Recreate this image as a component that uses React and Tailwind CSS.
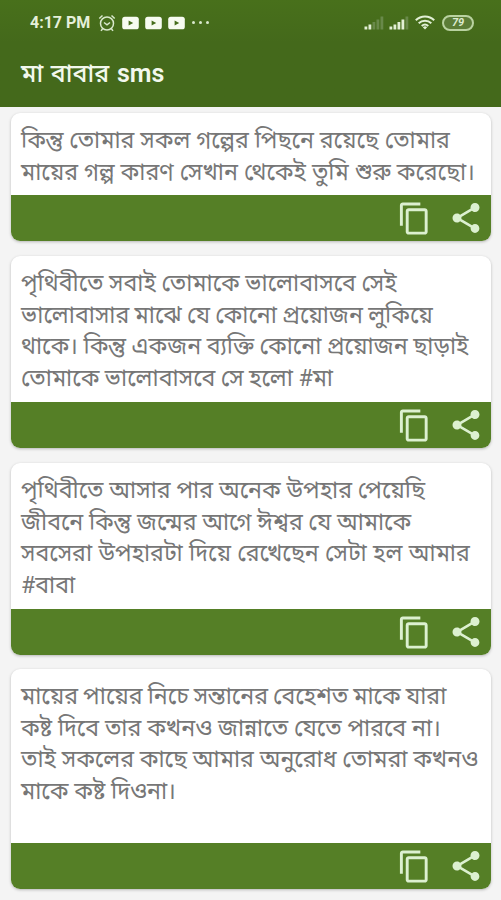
const cards = [
  {
    height: "h-[128px]",
    gap: "mt-[6px]",
    lines: [
      ["কিন্তু তোমার সকল গল্পের পিছনে রয়েছে তোমার", "[word-spacing:0.1px]"],
      ["মায়ের গল্প কারণ সেখান থেকেই তুমি শুরু করেছো।", "[word-spacing:0.3px]"],
    ],
  },
  {
    height: "h-[192px]",
    gap: "mt-[15px]",
    lines: [
      ["পৃথিবীতে সবাই তোমাকে ভালোবাসবে সেই", "[word-spacing:-0.2px]"],
      ["ভালোবাসার মাঝে যে কোনো প্রয়োজন লুকিয়ে", "[word-spacing:-0.5px]"],
      ["থাকে। কিন্তু একজন ব্যক্তি কোনো প্রয়োজন ছাড়াই", "[word-spacing:-0.2px]"],
      ["তোমাকে ভালোবাসবে সে হলো #মা", "[word-spacing:-0.3px]"],
    ],
  },
  {
    height: "h-[192px]",
    gap: "mt-[15px]",
    lines: [
      ["পৃথিবীতে আসার পার অনেক উপহার পেয়েছি", "[word-spacing:0.1px]"],
      ["জীবনে কিন্তু জন্মের আগে ঈশ্বর যে আমাকে", "[word-spacing:-0.1px]"],
      ["সবসেরা উপহারটা দিয়ে রেখেছেন সেটা হল আমার", "[word-spacing:0.6px]"],
      ["#বাবা", ""],
    ],
  },
  {
    height: "h-[220px]",
    gap: "mt-[14px]",
    lines: [
      ["মায়ের পায়ের নিচে সন্তানের বেহেশত মাকে যারা", "[word-spacing:-0.7px]"],
      ["কষ্ট দিবে তার কখনও জান্নাতে যেতে পারবে না।", "[word-spacing:0.1px]"],
      ["তাই সকলের কাছে আমার অনুরোধ তোমরা কখনও", ""],
      ["মাকে কষ্ট দিওনা।", ""],
    ],
  },
];

function CopyIcon() {
  return (
    <svg viewBox="0 0 24 24" className="h-[35px] w-[35px] fill-[#dcf0d0]">
      <path d="M16 1H4c-1.1 0-2 .9-2 2v14h2V3h12V1zm3 4H8c-1.1 0-2 .9-2 2v14c0 1.1.9 2 2 2h11c1.1 0 2-.9 2-2V7c0-1.1-.9-2-2-2zm0 16H8V7h11v14z" />
    </svg>
  );
}

function ShareIcon() {
  return (
    <svg viewBox="0 0 24 24" className="h-[36px] w-[36px] fill-[#dcf0d0]">
      <path d="M18 16.08c-.76 0-1.44.3-1.96.77L8.91 12.7c.05-.23.09-.46.09-.7s-.04-.47-.09-.7l7.05-4.11c.54.5 1.25.81 2.04.81 1.66 0 3-1.34 3-3s-1.34-3-3-3-3 1.34-3 3c0 .24.04.47.09.7L8.04 9.81C7.5 9.31 6.79 9 6 9c-1.66 0-3 1.34-3 3s1.34 3 3 3c.79 0 1.5-.31 2.04-.81l7.12 4.16c-.05.21-.08.43-.08.65 0 1.61 1.31 2.92 2.92 2.92s2.92-1.31 2.92-2.92-1.31-2.92-2.92-2.92z" />
    </svg>
  );
}

function AlarmIcon() {
  return (
    <svg viewBox="0 0 18 18" className="h-[18px] w-[18px] fill-none stroke-[#d9e8cd] stroke-[1.5]">
      <circle cx="9" cy="9.5" r="6.5" />
      <path d="M1.3 4.5 4.5 1.5M16.7 4.5l-3.2-3M6 8.5l3 2.4 3-2.4M4.5 15 3 16.9M13.5 15l1.5 1.9" />
    </svg>
  );
}

function VideoIcon() {
  return (
    <svg viewBox="0 0 17 14" className="h-[14px] w-[17px]">
      <rect x="0.2" y="0.7" width="16.6" height="12.6" rx="2.6" className="fill-[#f7fbf1]" />
      <path d="M6.6 4.6v4.8L11.2 7z" className="fill-[#456d1b]" />
    </svg>
  );
}

function Signal({ strong }) {
  const lit = strong ? 4 : 2;
  return (
    <svg viewBox="0 0 20 14" className="h-[14px] w-[20px]">
      {[3, 5, 7.5, 10, 13].map((h, i) => (
        <rect key={h} x={0.5 + i * 4} y={13.5 - h} width="2.8" height={h} className={i < lit ? "fill-[#e2efd5]" : "fill-[#69894a]"} />
      ))}
    </svg>
  );
}

function WifiIcon() {
  return (
    <svg viewBox="0 0 20 15" className="h-[15px] w-[20px] fill-none stroke-[#e2f0d6] stroke-2">
      <path d="M.8 5.2a13 13 0 0 1 18.4 0M3.7 8.3a9 9 0 0 1 12.6 0M6.7 11a5 5 0 0 1 6.6 0" />
      <path d="M7.8 12.2a3.3 3.3 0 0 1 4.4 0L10 14.6z" className="fill-[#e2f0d6] stroke-none" />
    </svg>
  );
}

export default function App() {
  return (
    <div className="h-[900px] w-[501px] overflow-hidden bg-[#f4f4f4] font-['Roboto','Noto_Sans_Bengali','Noto_Sans',sans-serif]">
      <header className="h-[107px] bg-linear-to-b from-[#48701b] to-[#44691b] to-40%">
        <div className="flex h-[45px] items-center pl-[30px] pr-[27px]">
          <span className="w-[61px] whitespace-nowrap text-[16px] font-bold leading-none text-[#e5f0da]">4:17 PM</span>
          <div className="ml-[7px] flex items-center gap-[6px]">
            <AlarmIcon />
            <VideoIcon />
            <VideoIcon />
            <VideoIcon />
          </div>
          <div className="ml-[7px] flex gap-[4px]">
            <i className="size-[3px] rounded-full bg-[#d9e8cd]" />
            <i className="size-[3px] rounded-full bg-[#d9e8cd]" />
            <i className="size-[3px] rounded-full bg-[#d9e8cd]" />
          </div>
          <div className="ml-auto flex items-center">
            <Signal />
            <span className="w-[5px]" />
            <Signal strong />
            <span className="w-[6px]" />
            <WifiIcon />
            <span className="ml-[7px] flex h-[16px] w-[32px] items-center justify-center rounded-full border-2 border-[#b9d2a0] bg-[#5b7c37] text-[11px] font-bold italic leading-none text-[#dcebcf]">79</span>
          </div>
        </div>
        <h1 className="pl-[21px] pt-[13px] text-[25px] font-medium leading-[32px] text-[#f2f8ed]">
          <span className="whitespace-nowrap [word-spacing:1.5px]">মা বাবার <span className="font-semibold">sms</span></span>
        </h1>
      </header>
      <main className="pl-[11px] pr-[10px]">
        {cards.map((card) => (
          <article key={card.height + card.lines[0][0]} className={`flex flex-col overflow-hidden rounded-[9px] bg-white shadow-[0_1px_3px_rgba(0,0,0,0.25)] ${card.height} ${card.gap}`}>
            <div className="flex-1 pl-[10px] pt-[12px] text-[23.2px] leading-[31.6px] text-[#777777]">
              {card.lines.map(([text, spacing]) => (
                <p key={text} className={`whitespace-nowrap ${spacing}`}>{text}</p>
              ))}
            </div>
            <footer className="flex h-[46px] items-center justify-end gap-[16px] bg-[#557f26] pr-[7px]">
              <CopyIcon />
              <ShareIcon />
            </footer>
          </article>
        ))}
      </main>
    </div>
  );
}
